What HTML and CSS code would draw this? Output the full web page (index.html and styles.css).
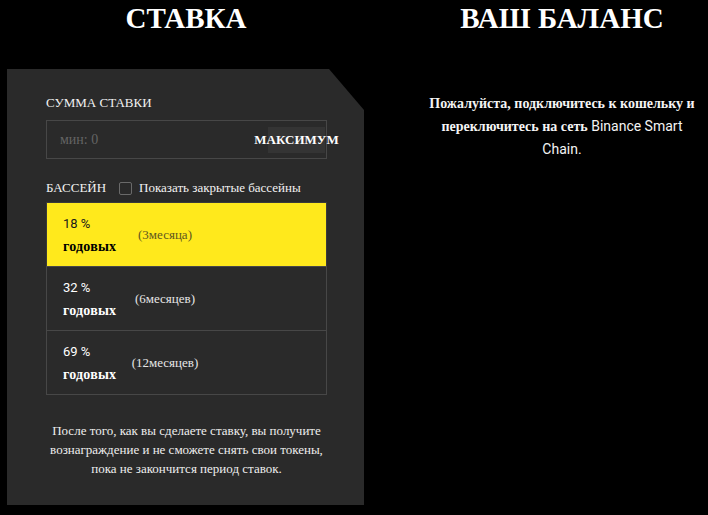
FILE: index.html
```html
<!DOCTYPE html>
<html lang="ru">
<head>
  <meta charset="UTF-8" />
  <meta name="viewport" content="width=device-width, initial-scale=1.0"/>
  <title>Ставка</title>
  <link rel="stylesheet" href="styles.css">
</head>
<body>

  <div class="page">
    <section class="stake">
      <h1>СТАВКА</h1>

      <div class="card">
        <div class="label">СУММА СТАВКИ</div>
        <div class="amount">
          <input type="text" placeholder="мин: 0" />
          <button class="max-btn">МАКСИМУМ</button>
        </div>

        <div class="pool-head">
          <span>БАССЕЙН</span>
          <label class="closed">
            <input type="checkbox" />
            <span>Показать закрытые бассейны</span>
          </label>
        </div>

        <div class="pools">
          <div class="pool active">
            <div class="rate"><span class="num">18 %</span><b>годовых</b></div>
            <div class="term">(3месяца)</div>
          </div>
          <div class="pool">
            <div class="rate"><span class="num">32 %</span><b>годовых</b></div>
            <div class="term">(6месяцев)</div>
          </div>
          <div class="pool">
            <div class="rate"><span class="num">69 %</span><b>годовых</b></div>
            <div class="term">(12месяцев)</div>
          </div>
        </div>

        <p class="note">После того, как вы сделаете ставку, вы получите вознаграждение и не сможете снять свои токены, пока не закончится период ставок.</p>
      </div>
    </section>

    <section class="balance">
      <h1>ВАШ БАЛАНС</h1>
      <p class="connect">Пожалуйста, подключитесь к кошельку и переключитесь на сеть <span class="num">Binance Smart Chain.</span></p>
    </section>
  </div>

</body>
</html>
```

FILE: styles.css
```css
* {
  margin: 0;
  padding: 0;
  box-sizing: border-box;
}

body {
  background: #000;
  color: #fff;
  font-family: 'Liberation Serif', 'Times New Roman', serif;
}

.page {
  display: grid;
  grid-template-columns: 372px 1fr;
}

h1 {
  text-align: center;
  font-size: 29px;
  line-height: 36px;
  font-weight: 700;
  color: #fff;
}

.num {
  font-family: 'Roboto', 'Liberation Sans', sans-serif;
}

/* left column */

.card {
  margin: 33px 0 0 7px;
  width: 357px;
  background: #2a2a2a;
  padding: 25px 37px 27px 39px;
  clip-path: polygon(0 0, calc(100% - 35px) 0, 100% 41px, 100% 100%, 0 100%);
}

.label {
  font-size: 13px;
  line-height: 17px;
  color: #f2f2f2;
}

.amount {
  margin-top: 9px;
  height: 39px;
  border: 1px solid #474747;
  display: flex;
  align-items: center;
}

.amount input {
  flex: 1;
  min-width: 0;
  height: 100%;
  background: transparent;
  border: none;
  outline: none;
  padding-left: 13px;
  font-family: inherit;
  font-size: 14px;
  color: #ddd;
}

.amount input::placeholder {
  color: #646464;
}

.max-btn {
  width: 57px;
  height: 26px;
  margin-right: 1px;
  background: #343434;
  border: none;
  color: #fff;
  font-family: inherit;
  font-size: 13px;
  font-weight: 700;
  white-space: nowrap;
  display: flex;
  align-items: center;
  justify-content: center;
  cursor: pointer;
}

.pool-head {
  margin-top: 21px;
  display: flex;
  align-items: center;
  gap: 13px;
  font-size: 13px;
  line-height: 16px;
  color: #f2f2f2;
}

.closed {
  display: flex;
  align-items: center;
  gap: 7px;
  cursor: pointer;
}

.closed input {
  appearance: none;
  width: 13px;
  height: 13px;
  border: 1px solid #6a6a6a;
  border-radius: 2px;
  background: transparent;
}

.pools {
  margin-top: 6px;
}

.pool {
  height: 65px;
  border: 1px solid #474747;
  margin-top: -1px;
  padding-left: 16px;
  display: flex;
  align-items: center;
  color: #fff;
  cursor: pointer;
}

.pool:first-child {
  margin-top: 0;
}

.rate {
  width: 56px;
  display: flex;
  flex-direction: column;
  font-size: 13px;
  line-height: 23px;
}

.rate b {
  font-size: 14px;
  letter-spacing: 0.2px;
}

.term {
  width: 92px;
  text-align: center;
  font-size: 13px;
  color: #e6e6e6;
}

.pool.active {
  background: #ffe91c;
  border-color: #3a3a3a;
}

.pool.active .rate {
  color: #1a1a1a;
}

.pool.active .rate b {
  color: #000;
}

.pool.active .term {
  color: #5e5620;
}

.note {
  margin-top: 26px;
  text-align: center;
  font-size: 13px;
  line-height: 19px;
  color: #eee;
}

/* right column */

.balance {
  padding-left: 44px;
}

.connect {
  margin: 57px auto 0;
  max-width: 279px;
  text-align: center;
  font-size: 14px;
  line-height: 22px;
  font-weight: 700;
  color: #f4f4f4;
}

.connect .num {
  font-size: 14px;
  font-weight: 400;
}
```
